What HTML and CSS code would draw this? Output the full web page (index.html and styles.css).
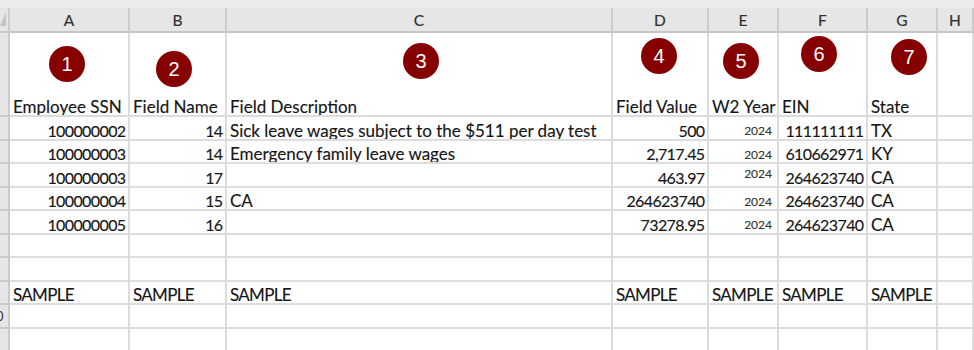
FILE: index.html
```html
<!DOCTYPE html>
<html lang="en">
<head>
    <meta charset="UTF-8">
    <title>W2 Field Import</title>
    <link rel="stylesheet" href="styles.css">
</head>
<body>
    <div class="sheet">
        <div class="topbar"><span class="select-all"></span></div>

        <div class="row col-heads">
            <div class="rh"></div>
            <div class="ch">A</div>
            <div class="ch">B</div>
            <div class="ch">C</div>
            <div class="ch">D</div>
            <div class="ch">E</div>
            <div class="ch">F</div>
            <div class="ch">G</div>
            <div class="ch">H</div>
        </div>

        <div class="row labels">
            <div class="rh"></div>
            <div class="cell">Employee SSN</div>
            <div class="cell">Field Name</div>
            <div class="cell">Field Description</div>
            <div class="cell">Field Value</div>
            <div class="cell">W2 Year</div>
            <div class="cell">EIN</div>
            <div class="cell">State</div>
            <div class="cell"></div>
        </div>

        <div class="row">
            <div class="rh"></div>
            <div class="cell num">100000002</div>
            <div class="cell num">14</div>
            <div class="cell">Sick leave wages subject to the $511 per day test</div>
            <div class="cell num">500</div>
            <div class="cell num small">2024</div>
            <div class="cell num">111111111</div>
            <div class="cell">TX</div>
            <div class="cell"></div>
        </div>
        <div class="row">
            <div class="rh"></div>
            <div class="cell num">100000003</div>
            <div class="cell num">14</div>
            <div class="cell">Emergency family leave wages</div>
            <div class="cell num">2,717.45</div>
            <div class="cell num small">2024</div>
            <div class="cell num">610662971</div>
            <div class="cell">KY</div>
            <div class="cell"></div>
        </div>
        <div class="row">
            <div class="rh"></div>
            <div class="cell num">100000003</div>
            <div class="cell num">17</div>
            <div class="cell"></div>
            <div class="cell num">463.97</div>
            <div class="cell num small raised">2024</div>
            <div class="cell num">264623740</div>
            <div class="cell">CA</div>
            <div class="cell"></div>
        </div>
        <div class="row">
            <div class="rh"></div>
            <div class="cell num">100000004</div>
            <div class="cell num">15</div>
            <div class="cell">CA</div>
            <div class="cell num">264623740</div>
            <div class="cell num small">2024</div>
            <div class="cell num">264623740</div>
            <div class="cell">CA</div>
            <div class="cell"></div>
        </div>
        <div class="row">
            <div class="rh"></div>
            <div class="cell num">100000005</div>
            <div class="cell num">16</div>
            <div class="cell"></div>
            <div class="cell num">73278.95</div>
            <div class="cell num small">2024</div>
            <div class="cell num">264623740</div>
            <div class="cell">CA</div>
            <div class="cell"></div>
        </div>
        <div class="row">
            <div class="rh"></div>
            <div class="cell"></div><div class="cell"></div><div class="cell"></div><div class="cell"></div>
            <div class="cell"></div><div class="cell"></div><div class="cell"></div><div class="cell"></div>
        </div>
        <div class="row">
            <div class="rh"></div>
            <div class="cell"></div><div class="cell"></div><div class="cell"></div><div class="cell"></div>
            <div class="cell"></div><div class="cell"></div><div class="cell"></div><div class="cell"></div>
        </div>
        <div class="row sample">
            <div class="rh"></div>
            <div class="cell">SAMPLE</div>
            <div class="cell">SAMPLE</div>
            <div class="cell">SAMPLE</div>
            <div class="cell">SAMPLE</div>
            <div class="cell">SAMPLE</div>
            <div class="cell">SAMPLE</div>
            <div class="cell">SAMPLE</div>
            <div class="cell"></div>
        </div>
        <div class="row">
            <div class="rh"><span>10</span></div>
            <div class="cell"></div><div class="cell"></div><div class="cell"></div><div class="cell"></div>
            <div class="cell"></div><div class="cell"></div><div class="cell"></div><div class="cell"></div>
        </div>
        <div class="row">
            <div class="rh"></div>
            <div class="cell"></div><div class="cell"></div><div class="cell"></div><div class="cell"></div>
            <div class="cell"></div><div class="cell"></div><div class="cell"></div><div class="cell"></div>
        </div>

        <!-- numbered callouts dropped on top of the sheet -->
        <span class="callout c1">1</span>
        <span class="callout c2">2</span>
        <span class="callout c3">3</span>
        <span class="callout c4">4</span>
        <span class="callout c5">5</span>
        <span class="callout c6">6</span>
        <span class="callout c7">7</span>
    </div>
</body>
</html>
```

FILE: styles.css
```css
* {
    margin: 0;
    padding: 0;
    box-sizing: border-box;
}

body {
    font-family: Lato, "Open Sans", sans-serif;
    background: #fff;
    color: #161616;
}

.sheet {
    position: relative;
    width: 974px;
    height: 350px;
    overflow: hidden;
}

.topbar {
    position: relative;
    height: 8px;
    background: #ececec;
}

/* little triangle in the corner (select all) */
.select-all {
    position: absolute;
    left: 0;
    top: 12px;
    width: 0;
    height: 0;
    border-left: 6px solid transparent;
    border-bottom: 14px solid #c4c4c4;
    z-index: 2;
}

.row {
    display: grid;
    grid-template-columns: 10px 120px 97px 386px 96px 70px 89px 70px 1fr;
    height: 23.5px;
}

.row > div {
    border-right: 2px solid #dcdcdc;
    border-bottom: 2px solid #dcdcdc;
    overflow: hidden;
    white-space: nowrap;
}

.col-heads {
    height: 25px;
    background: #e6e6e6;
}

.col-heads > div {
    display: flex;
    align-items: center;
    justify-content: center;
    font-size: 15.5px;
    color: #333;
    -webkit-text-stroke: 0.2px #333;
    border-right-color: #cbcbcb;
    border-bottom-color: #c6c6c6;
}

.labels {
    height: 84px;
}

/* row numbers: only the tail end of the column is in view */
.rh {
    background: #e6e6e6;
    border-right-color: #cbcbcb !important;
    border-bottom-color: #cacaca !important;
    display: flex;
    align-items: center;
    font-size: 13px;
    color: #333;
}

.rh span {
    flex: none;
    width: 30px;
    margin-left: -19px;
    text-align: center;
}

.cell {
    display: flex;
    align-items: flex-end;
    padding: 0 2px 0 3px;
    font-size: 17px;
    line-height: 1;
    -webkit-text-stroke: 0.15px #161616;
}

.cell.num {
    justify-content: flex-end;
    font-size: 16px;
    letter-spacing: -0.6px;
    padding-right: 2.5px;
}

.sample .cell {
    letter-spacing: -0.7px;
}

.cell.small {
    font-size: 12px;
    letter-spacing: 0;
    color: #333;
    -webkit-text-stroke: 0.15px #333;
    padding-bottom: 1.5px;
    padding-right: 5px;
}

.cell.small.raised {
    padding-bottom: 5.5px;
}

.callout {
    position: absolute;
    width: 36px;
    height: 36px;
    border-radius: 50%;
    background: #860000;
    color: #fff;
    font-family: "Liberation Sans", Arial, sans-serif;
    font-size: 20px;
    display: flex;
    align-items: center;
    justify-content: center;
}

.c1 { left: 49px; top: 46px; }
.c2 { left: 156px; top: 51px; }
.c3 { left: 403px; top: 43px; }
.c4 { left: 641px; top: 38px; }
.c5 { left: 723px; top: 43px; }
.c6 { left: 801px; top: 36px; }
.c7 { left: 891px; top: 39px; }
```
